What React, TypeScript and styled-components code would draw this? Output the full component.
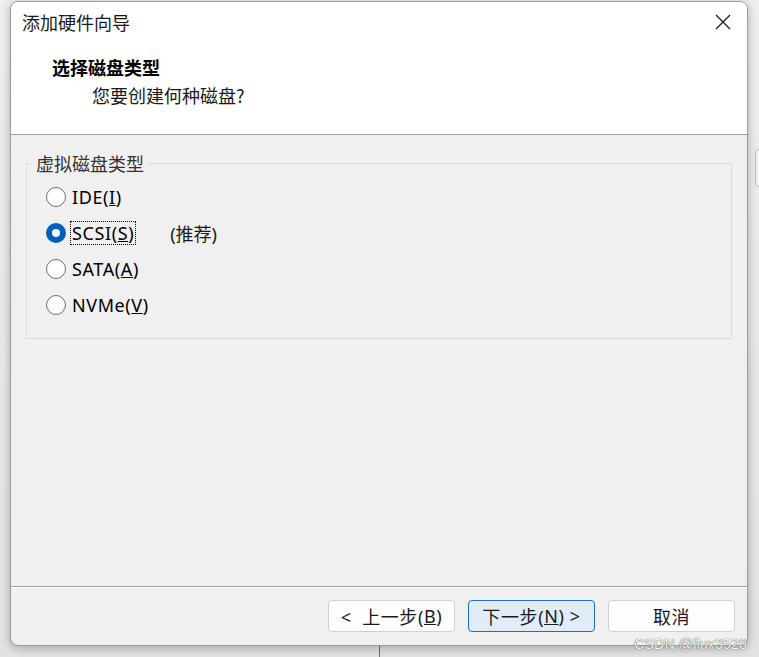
import React from "react";
import styled, { createGlobalStyle } from "styled-components";

const Global = createGlobalStyle`
  html, body { margin: 0; padding: 0; }
  body {
    width: 759px; height: 657px; overflow: hidden;
    background: #e6e6e6;
    font-family: "Noto Sans", "Noto Sans CJK SC", sans-serif;
  }
`;

const Page = styled.div`
  position: relative;
  width: 759px;
  height: 657px;
  box-sizing: border-box;
  padding: 1px 11px 11px 10px;
  background: linear-gradient(#efefef, #e2e2e2);
`;

const BgLine = styled.div`
  position: absolute;
  left: 379px;
  top: 640px;
  width: 1px;
  height: 17px;
  background: #6e6e6e;
`;

const BgTab = styled.div`
  position: absolute;
  left: 755px;
  top: 149px;
  width: 10px;
  height: 36px;
  border: 1px solid #bdbdbd;
  border-radius: 4px;
  background: #f4f4f4;
`;

const Dialog = styled.div`
  position: relative;
  height: 100%;
  box-sizing: border-box;
  display: flex;
  flex-direction: column;
  border: 1px solid #9c9c9c;
  border-radius: 8px;
  overflow: hidden;
  background: #f0f0f0;
  box-shadow: 0 2px 10px rgba(0, 0, 0, 0.28);
`;

const Header = styled.div`
  height: 132px;
  background: #ffffff;
  border-bottom: 1px solid #a0a0a0;
  display: flex;
  flex-direction: column;
`;

const TitleRow = styled.div`
  height: 40px;
  display: flex;
  align-items: center;
  justify-content: space-between;
  padding: 0 16px 0 11px;
`;

const Title = styled.div`
  font-family: "Noto Sans CJK SC", sans-serif;
  font-size: 18px;
  line-height: 24px;
  color: #1a1a1a;
`;

const Close = styled.div`
  width: 16px;
  height: 16px;
  display: flex;
`;

const Heading = styled.div`
  font-family: "Noto Sans CJK SC", sans-serif;
  font-weight: 700;
  font-size: 18px;
  color: #000;
  margin: 13px 0 0 41px;
  line-height: 24px;
`;

const Sub = styled.div`
  font-family: "Noto Sans CJK SC", sans-serif;
  font-size: 18px;
  color: #1a1a1a;
  margin: 4px 0 0 81px;
  line-height: 24px;
`;

const Body = styled.div`
  flex: 1;
  padding: 28px 15px 0 15px;
  border-bottom: 1px solid #a0a0a0;
  box-shadow: 0 1px 0 #ffffff;
`;

const Group = styled.fieldset`
  margin: 0;
  height: 176px;
  box-sizing: border-box;
  border: 1px solid #dcdcdc;
  padding: 21px 0 0 19px;
  position: relative;
`;

const Legend = styled.legend`
  position: absolute;
  top: -13px;
  left: 6px;
  padding: 0 3px;
  background: #f0f0f0;
  font-family: "Noto Sans CJK SC", sans-serif;
  font-size: 18px;
  line-height: 24px;
  color: #333;
`;

const Options = styled.div`
  display: flex;
  flex-direction: column;
  gap: 12px;
`;

const Option = styled.label`
  display: flex;
  align-items: center;
  height: 24px;
  font-size: 18px;
  letter-spacing: 0.6px;
  color: #000;
`;

const Radio = styled.span<{ $checked?: boolean }>`
  flex: none;
  width: 20px;
  height: 20px;
  box-sizing: border-box;
  border-radius: 50%;
  margin-right: 4px;
  border: ${(p) => (p.$checked ? "6.5px solid #005fb8" : "1px solid #6e6e6e")};
  background: #fff;
`;

const OptText = styled.span<{ $focus?: boolean }>`
  padding: 0 1px;
  border: 1px dotted ${(p) => (p.$focus ? "#000" : "transparent")};
  line-height: 22px;
`;

const Note = styled.span`
  margin-left: 34px;
  font-family: "Noto Sans", "Noto Sans CJK SC", sans-serif;
  letter-spacing: 0;
  color: #1a1a1a;
`;

const Footer = styled.div`
  height: 58px;
  display: flex;
  justify-content: flex-end;
  align-items: flex-start;
  gap: 13px;
  padding: 13px 12px 0 0;
  box-sizing: border-box;
`;

const Button = styled.div<{ $primary?: boolean }>`
  width: 127px;
  height: 32px;
  box-sizing: border-box;
  border-radius: 4px;
  display: flex;
  align-items: center;
  justify-content: center;
  font-size: 18px;
  letter-spacing: 0.6px;
  white-space: pre;
  color: #1a1a1a;
  background: ${(p) => (p.$primary ? "#e0ecf8" : "#fdfdfd")};
  border: 1px solid ${(p) => (p.$primary ? "#1a6fc4" : "#d0d0d0")};
`;

const Watermark = styled.div`
  position: absolute;
  right: 12px;
  bottom: 5px;
  font-family: "Liberation Sans", sans-serif;
  font-size: 14px;
  color: #f4f4f4;
  text-shadow: 0 0 1px #666, 0 0 1px #666;
  letter-spacing: 0.2px;
`;

export default function App() {
  return (
    <>
      <Global />
      <Page>
        <BgLine />
        <BgTab />
        <Dialog>
          <Header>
            <TitleRow>
              <Title>添加硬件向导</Title>
              <Close>
                <svg width="16" height="16" viewBox="0 0 16 16">
                  <path d="M1 1 L15 15 M15 1 L1 15" stroke="#1a1a1a" strokeWidth="1.3" />
                </svg>
              </Close>
            </TitleRow>
            <Heading>选择磁盘类型</Heading>
            <Sub>您要创建何种磁盘?</Sub>
          </Header>
          <Body>
            <Group>
              <Legend>虚拟磁盘类型</Legend>
              <Options>
                <Option>
                  <Radio />
                  <OptText>IDE(<u>I</u>)</OptText>
                </Option>
                <Option>
                  <Radio $checked />
                  <OptText $focus>SCSI(<u>S</u>)</OptText>
                  <Note>(推荐)</Note>
                </Option>
                <Option>
                  <Radio />
                  <OptText>SATA(<u>A</u>)</OptText>
                </Option>
                <Option>
                  <Radio />
                  <OptText>NVMe(<u>V</u>)</OptText>
                </Option>
              </Options>
            </Group>
          </Body>
          <Footer>
            <Button>{"<  上一步("}<u>B</u>)</Button>
            <Button $primary>下一步(<u>N</u>{") >"}</Button>
            <Button>取消</Button>
          </Footer>
        </Dialog>
        <Watermark>CSDN @liux3528</Watermark>
      </Page>
    </>
  );
}
